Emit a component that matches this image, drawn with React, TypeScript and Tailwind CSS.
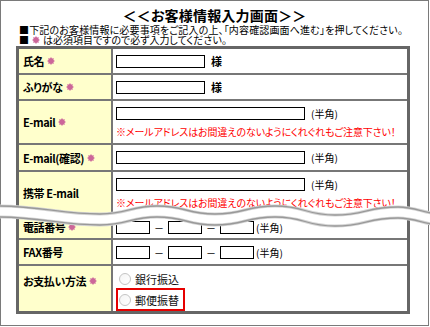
import clsx from 'clsx';
import type { ReactNode } from 'react';

function Hoshi() {
  return (
    <svg width="8" height="8" viewBox="0 0 8 8" className="inline-block shrink-0">
      <path
        d="M8 4 L6.4 5 L6.83 6.83 L5 6.4 L4 8 L3 6.4 L1.17 6.83 L1.6 5 L0 4 L1.6 3 L1.17 1.17 L3 1.6 L4 0 L5 1.6 L6.83 1.17 L6.4 3Z"
        fill="#cc6699"
      />
    </svg>
  );
}

function Fila({
  etiqueta,
  obligatorio,
  alto,
  arriba,
  primera,
  children,
}: {
  etiqueta: string;
  obligatorio?: boolean;
  alto: string;
  arriba?: boolean;
  primera?: boolean;
  children: ReactNode;
}) {
  return (
    <div className={clsx('flex', !primera && 'border-t-2 border-[#777]')}>
      <div
        className={clsx(
          'w-[94px] shrink-0 bg-[#ffffcc] border-r-2 border-[#777] flex gap-[3px] pl-[4px] text-[11px] font-bold leading-[14px] tracking-[-0.4px]',
          alto,
          arriba ? 'items-start pt-[8px]' : 'items-center',
        )}
      >
        <span>{etiqueta}</span>
        {obligatorio && (
          <span className="h-[14px] flex items-center">
            <Hoshi />
          </span>
        )}
      </div>
      <div className={clsx('flex-1 pl-[3px]', alto)}>{children}</div>
    </div>
  );
}

function Caja({ ancho }: { ancho: string }) {
  return <div className={clsx('h-[13px] border border-black bg-white shrink-0', ancho)} />;
}

function Aviso() {
  return (
    <p className="text-[10px] leading-[12px] text-[#ff0000] tracking-[-0.1px] whitespace-nowrap">
      ※メールアドレスはお間違えのないようにくれぐれもご注意下さい！
    </p>
  );
}

function Radio({ texto }: { texto: string }) {
  return (
    <div className="flex items-center gap-[4px]">
      <span className="w-[12px] h-[12px] rounded-full border border-[#c4c4c4] bg-gradient-to-br from-[#f4f4f4] to-white" />
      <span className="text-[11px] leading-[14px] text-[#111]">{texto}</span>
    </div>
  );
}

export default function App() {
  return (
    <div className="relative w-[430px] h-[327px] bg-white overflow-hidden font-['Noto_Sans_CJK_JP',sans-serif] [font-feature-settings:'palt'] text-black">
      <div className="w-[429px] h-[326px] border border-[#7a7a7a] pt-[5px] px-[15px]">
        <h1 className="text-center text-[14px] font-bold leading-[18px] mb-[1px] tracking-[0.2px]">
          ＜＜お客様情報入力画面＞＞
        </h1>
        <p className="pl-[3px] text-[10px] leading-[10px] whitespace-nowrap tracking-[0.15px]">
          ■下記のお客様情報に必要事項をご記入の上、「内容確認画面へ進む」を押してください。
        </p>
        <p className="pl-[3px] mb-[1px] text-[10px] leading-[10px] whitespace-nowrap flex items-center gap-[3px]">
          <span>■</span>
          <Hoshi />
          <span>は必須項目ですので必ず入力してください。</span>
        </p>

        <div className="w-[394px] border-[3px] border-[#666]">
          <Fila etiqueta="氏名" obligatorio alto="h-[24px]" primera>
            <div className="flex items-center h-full gap-[6px]">
              <Caja ancho="w-[89px]" />
              <span className="text-[11px] font-bold">様</span>
            </div>
          </Fila>
          <Fila etiqueta="ふりがな" obligatorio alto="h-[24px]">
            <div className="flex items-center h-full gap-[6px]">
              <Caja ancho="w-[89px]" />
              <span className="text-[11px] font-bold">様</span>
            </div>
          </Fila>
          <Fila etiqueta="E-mail" obligatorio alto="h-[42px]">
            <div className="flex flex-col justify-center h-full gap-[5px]">
              <div className="flex items-center gap-[6px]">
                <Caja ancho="w-[189px]" />
                <span className="text-[10px]">(半角)</span>
              </div>
              <Aviso />
            </div>
          </Fila>
          <Fila etiqueta="E-mail(確認)" obligatorio alto="h-[25px]">
            <div className="flex items-center h-full gap-[6px]">
              <Caja ancho="w-[189px]" />
              <span className="text-[10px]">(半角)</span>
            </div>
          </Fila>
          <Fila etiqueta="携帯 E-mail" alto="h-[42px]">
            <div className="flex flex-col justify-center h-full gap-[5px]">
              <div className="flex items-center gap-[6px]">
                <Caja ancho="w-[189px]" />
                <span className="text-[10px]">(半角)</span>
              </div>
              <Aviso />
            </div>
          </Fila>
          <Fila etiqueta="電話番号" obligatorio alto="h-[22px]">
            <div className="flex items-center h-full">
              <Caja ancho="w-[34px]" />
              <span className="w-[18px] text-center text-[10px]">－</span>
              <Caja ancho="w-[34px]" />
              <span className="w-[18px] text-center text-[10px]">－</span>
              <Caja ancho="w-[34px]" />
              <span className="ml-[2px] text-[10px]">(半角)</span>
            </div>
          </Fila>
          <Fila etiqueta="FAX番号" alto="h-[24px]">
            <div className="flex items-center h-full">
              <Caja ancho="w-[34px]" />
              <span className="w-[18px] text-center text-[10px]">－</span>
              <Caja ancho="w-[34px]" />
              <span className="w-[18px] text-center text-[10px]">－</span>
              <Caja ancho="w-[34px]" />
              <span className="ml-[2px] text-[10px]">(半角)</span>
            </div>
          </Fila>
          <Fila etiqueta="お支払い方法" obligatorio alto="h-[45px]" arriba>
            <div className="flex flex-col pt-[6px] gap-[2px]">
              <div className="pl-[3px] h-[14px] flex items-center">
                <Radio texto="銀行振込" />
              </div>
              <div className="w-[69px] h-[23px] border-2 border-[#e60000] pl-[1px] flex items-center">
                <Radio texto="郵便振替" />
              </div>
            </div>
          </Fila>
        </div>
      </div>

      {/* corte ondulado */}
      <svg className="absolute left-0 top-0 pointer-events-none" width="430" height="327" viewBox="0 0 430 327">
        <defs>
          <path
            id="onda"
            d="M-2 206 C40 206 62 214 100 214 C128 214 130 206 157 206 C186 206 186 214 215 214 C245 214 245 206 275 206 C305 206 305 215 335 215 C366 215 366 207 398 207 C414 207 422 212 432 213"
          />
        </defs>
        <use href="#onda" transform="translate(0 5.5)" stroke="#fff" strokeWidth="11" fill="none" />
        <use href="#onda" stroke="#d4d4d4" strokeWidth="3" fill="none" />
        <use href="#onda" stroke="#999" strokeWidth="1.3" fill="none" />
        <use href="#onda" transform="translate(0 11)" stroke="#d4d4d4" strokeWidth="3" fill="none" />
        <use href="#onda" transform="translate(0 11)" stroke="#999" strokeWidth="1.3" fill="none" />
      </svg>
    </div>
  );
}
